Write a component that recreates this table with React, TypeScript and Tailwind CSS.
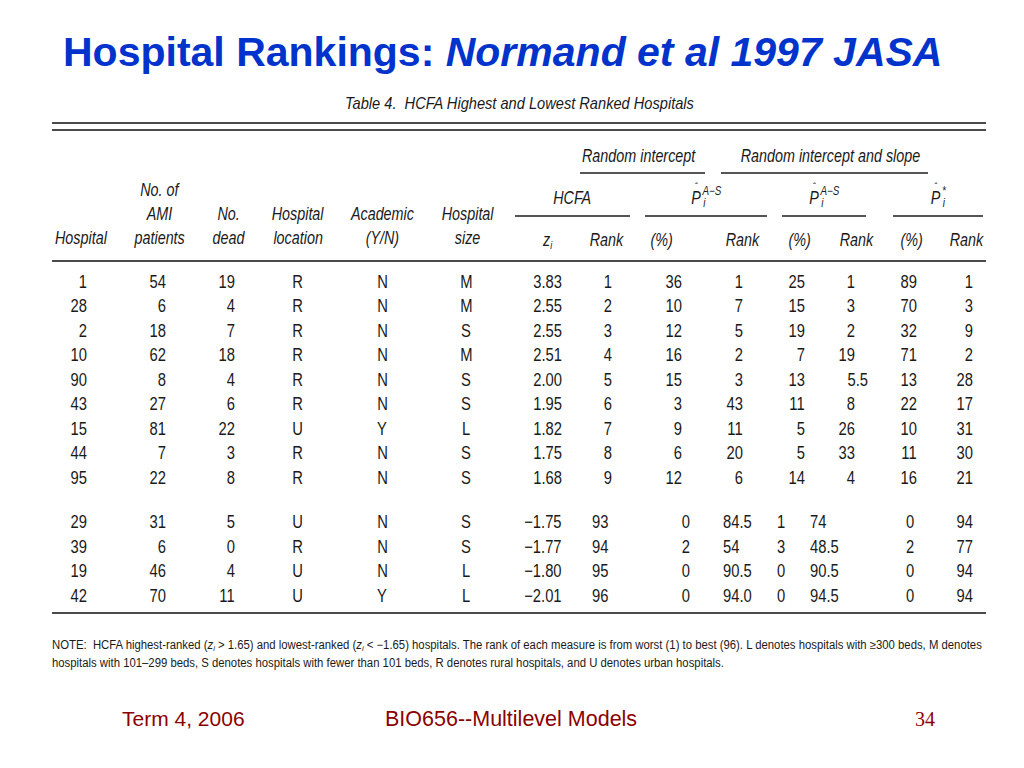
import type { ReactNode } from "react";

type Col = { w: string; head: string; top: string; bot: string; ot: string; ob: string };

const cols: Col[] = [
  { w: "w-[60px]", head: "justify-start pl-[3px]", top: "justify-end pr-[25px]", bot: "justify-end pr-[25px]", ot: "origin-right", ob: "origin-right" },
  { w: "w-[84px]", head: "justify-center pl-[11px]", top: "justify-end pr-[30px]", bot: "justify-end pr-[30px]", ot: "origin-right", ob: "origin-right" },
  { w: "w-[60px]", head: "justify-center pl-[5px]", top: "justify-end pr-[21px]", bot: "justify-end pr-[21px]", ot: "origin-right", ob: "origin-right" },
  { w: "w-[84px]", head: "justify-center", top: "justify-center pr-[2px]", bot: "justify-center pr-[2px]", ot: "origin-center", ob: "origin-center" },
  { w: "w-[84px]", head: "justify-center", top: "justify-center", bot: "justify-center", ot: "origin-center", ob: "origin-center" },
  { w: "w-[88px]", head: "justify-center", top: "justify-center pr-[4px]", bot: "justify-center pr-[4px]", ot: "origin-center", ob: "origin-center" },
  { w: "w-[64px]", head: "justify-center pl-[8px]", top: "justify-end pr-[14px]", bot: "justify-end pr-[14px]", ot: "origin-right", ob: "origin-right" },
  { w: "w-[60px]", head: "justify-center", top: "justify-end pr-[24px]", bot: "justify-start pl-[16px]", ot: "origin-right", ob: "origin-left" },
  { w: "w-[64px]", head: "justify-center pr-[12px]", top: "justify-end pr-[18px]", bot: "justify-end pr-[10px]", ot: "origin-right", ob: "origin-right" },
  { w: "w-[72px]", head: "justify-center pl-[12px]", top: "justify-end pr-[29px]", bot: "justify-start pl-[23px]", ot: "origin-right", ob: "origin-left" },
  { w: "w-[36px]", head: "justify-center pl-[20px]", top: "justify-end pr-[3px]", bot: "justify-start pl-[5px]", ot: "origin-right", ob: "origin-left" },
  { w: "w-[76px]", head: "justify-center pl-[20px]", top: "justify-end pr-[29px]", bot: "justify-start pl-[2px]", ot: "origin-right", ob: "origin-left" },
  { w: "w-[56px]", head: "justify-center", top: "justify-end pr-[23px]", bot: "justify-center pr-[4px]", ot: "origin-right", ob: "origin-center" },
  { w: "w-[46px]", head: "justify-center pl-[7px]", top: "justify-end pr-[13px]", bot: "justify-end pr-[13px]", ot: "origin-right", ob: "origin-right" },
];

const leftHeads: string[][] = [
  ["Hospital"],
  ["No. of", "AMI", "patients"],
  ["No.", "dead"],
  ["Hospital", "location"],
  ["Academic", "(Y/N)"],
  ["Hospital", "size"],
];

const topRows: string[][] = [
  ["1", "54", "19", "R", "N", "M", "3.83", "1", "36", "1", "25", "1", "89", "1"],
  ["28", "6", "4", "R", "N", "M", "2.55", "2", "10", "7", "15", "3", "70", "3"],
  ["2", "18", "7", "R", "N", "S", "2.55", "3", "12", "5", "19", "2", "32", "9"],
  ["10", "62", "18", "R", "N", "M", "2.51", "4", "16", "2", "7", "19", "71", "2"],
  ["90", "8", "4", "R", "N", "S", "2.00", "5", "15", "3", "13", "5.5", "13", "28"],
  ["43", "27", "6", "R", "N", "S", "1.95", "6", "3", "43", "11", "8", "22", "17"],
  ["15", "81", "22", "U", "Y", "L", "1.82", "7", "9", "11", "5", "26", "10", "31"],
  ["44", "7", "3", "R", "N", "S", "1.75", "8", "6", "20", "5", "33", "11", "30"],
  ["95", "22", "8", "R", "N", "S", "1.68", "9", "12", "6", "14", "4", "16", "21"],
];

const bottomRows: string[][] = [
  ["29", "31", "5", "U", "N", "S", "−1.75", "93", "0", "84.5", "1", "74", "0", "94"],
  ["39", "6", "0", "R", "N", "S", "−1.77", "94", "2", "54", "3", "48.5", "2", "77"],
  ["19", "46", "4", "U", "N", "L", "−1.80", "95", "0", "90.5", "0", "90.5", "0", "94"],
  ["42", "70", "11", "U", "Y", "L", "−2.01", "96", "0", "94.0", "0", "94.5", "0", "94"],
];

// squeezed text, stands in for the scan's Helvetica Narrow
function N({ children, o = "origin-center" }: { children: ReactNode; o?: string }) {
  return <span className={`inline-block scale-x-[0.82] whitespace-nowrap ${o}`}>{children}</span>;
}

function Rule() {
  return <div className="h-[2px] w-[934px] bg-[#4a4a4a]" />;
}

function PHat({ sup }: { sup: string }) {
  return (
    <N>
      <span className="inline-flex h-[20px] items-center">
        <span className="relative leading-[20px]">
          P<span className="absolute left-[4px] top-[-6px] text-[11px] leading-[11px]">ˆ</span>
        </span>
        <span className="mt-[-2px] ml-[2px] flex flex-col text-[12px] leading-[12px]">
          <span>{sup}</span>
          <span className="pl-[1px]">i</span>
        </span>
      </span>
    </N>
  );
}

function DataRow({ row, group }: { row: string[]; group: "top" | "bot" }) {
  return (
    <div className="flex h-[24.5px] items-center">
      {row.map((v, i) => {
        const c = cols[i];
        const special = v === "5.5";
        const align = special ? "justify-end pr-[16px]" : group === "top" ? c.top : c.bot;
        const o = special ? "origin-right" : group === "top" ? c.ot : c.ob;
        return (
          <div key={i} className={`flex ${c.w} ${align}`}>
            <N o={o}>{v}</N>
          </div>
        );
      })}
    </div>
  );
}

export default function App() {
  return (
    <div className="h-[768px] w-[1024px] overflow-hidden bg-white">
      <h1 className="h-[76px] whitespace-nowrap pl-[63px] pt-[28px] font-['Liberation_Sans',Arial,sans-serif] text-[41px] leading-[48px] font-bold text-[#0033cc]">
        Hospital Rankings: <span className="italic">Normand et al 1997 JASA</span>
      </h1>

      <div className="font-['Liberation_Sans',Arial,sans-serif] text-[#1a1a1a]">
        <p className="mt-[18px] pl-[345px] text-[17px] leading-[20px] italic">
          <span className="inline-block origin-left scale-x-[0.86] whitespace-nowrap">
            Table 4.&nbsp;&nbsp;HCFA Highest and Lowest Ranked Hospitals
          </span>
        </p>

        <div className="mt-[8px] flex flex-col gap-[5px] pl-[52px]">
          <Rule />
          <Rule />
        </div>

        <div className="flex pl-[52px] text-[17.5px] italic">
          {leftHeads.map((lines, i) => (
            <div key={i} className={`flex ${cols[i].w} ${cols[i].head} items-end pb-[10px] leading-[24px]`}>
              <div className={`flex flex-col ${i === 0 ? "items-start" : "items-center"}`}>
                {lines.map((l) => (
                  <N key={l} o={i === 0 ? "origin-left" : "origin-center"}>
                    {l}
                  </N>
                ))}
              </div>
            </div>
          ))}

          <div className="flex w-[474px] flex-col">
            <div className="flex pt-[15px] leading-[20px]">
              <div className="ml-[68px] w-[125px] border-b-2 border-[#555] pb-[6px] pl-[2px]">
                <N o="origin-left">Random intercept</N>
              </div>
              <div className="ml-[16px] w-[207px] border-b-2 border-[#555] pb-[6px] text-center">
                <N>Random intercept and slope</N>
              </div>
            </div>
            <div className="flex h-[43px] items-end leading-[20px]">
              <div className="ml-[3px] flex h-[29px] w-[115px] justify-center border-b-2 border-[#555]">
                <N>HCFA</N>
              </div>
              <div className="ml-[15px] flex h-[29px] w-[122px] justify-center border-b-2 border-[#555]">
                <PHat sup="A−S" />
              </div>
              <div className="ml-[15px] flex h-[29px] w-[84px] justify-center border-b-2 border-[#555]">
                <PHat sup="A−S" />
              </div>
              <div className="ml-[27px] flex h-[29px] w-[90px] justify-center border-b-2 border-[#555]">
                <PHat sup="*" />
              </div>
            </div>
            <div className="flex pt-[13px] pb-[10px] leading-[20px]">
              <div className={`flex ${cols[6].w} ${cols[6].head}`}>
                <N>
                  z<sub className="text-[11px]">i</sub>
                </N>
              </div>
              {["Rank", "(%)", "Rank", "(%)", "Rank", "(%)", "Rank"].map((h, k) => (
                <div key={k} className={`flex ${cols[k + 7].w} ${cols[k + 7].head}`}>
                  <N>{h}</N>
                </div>
              ))}
            </div>
          </div>
        </div>

        <div className="pl-[52px]">
          <Rule />
        </div>

        <div className="pt-[8px] pl-[52px] text-[18px]">
          {topRows.map((r, i) => (
            <DataRow key={i} row={r} group="top" />
          ))}
          <div className="h-[20px]" />
          {bottomRows.map((r, i) => (
            <DataRow key={i} row={r} group="bot" />
          ))}
        </div>

        <div className="mt-[3px] pl-[52px]">
          <Rule />
        </div>

        <p className="mt-[22px] pl-[52px] text-[12px] leading-[18px]">
          <span className="inline-block origin-left scale-x-[0.944] whitespace-nowrap">
            NOTE:&nbsp;&nbsp;HCFA highest-ranked (<i>z</i>
            <sub className="text-[8px] italic">i</sub> &gt; 1.65) and lowest-ranked (<i>z</i>
            <sub className="text-[8px] italic">i</sub> &lt; −1.65) hospitals. The rank of each measure is from worst (1)
            to best (96). L denotes hospitals with ≥300 beds, M denotes
            <br />
            hospitals with 101–299 beds, S denotes hospitals with fewer than 101 beds, R denotes rural hospitals, and U
            denotes urban hospitals.
          </span>
        </p>
      </div>

      <div className="mt-[33px] flex items-center text-[#8b0000]">
        <div className="w-[385px] pl-[122px] font-['Liberation_Sans',sans-serif] text-[21px] leading-[28px]">
          Term 4, 2006
        </div>
        <div className="flex-1 font-['Liberation_Sans',sans-serif] text-[21.5px] leading-[28px]">
          BIO656--Multilevel Models
        </div>
        <div className="pr-[89px] font-['Liberation_Serif',serif] text-[20px] leading-[28px]">34</div>
      </div>
    </div>
  );
}
